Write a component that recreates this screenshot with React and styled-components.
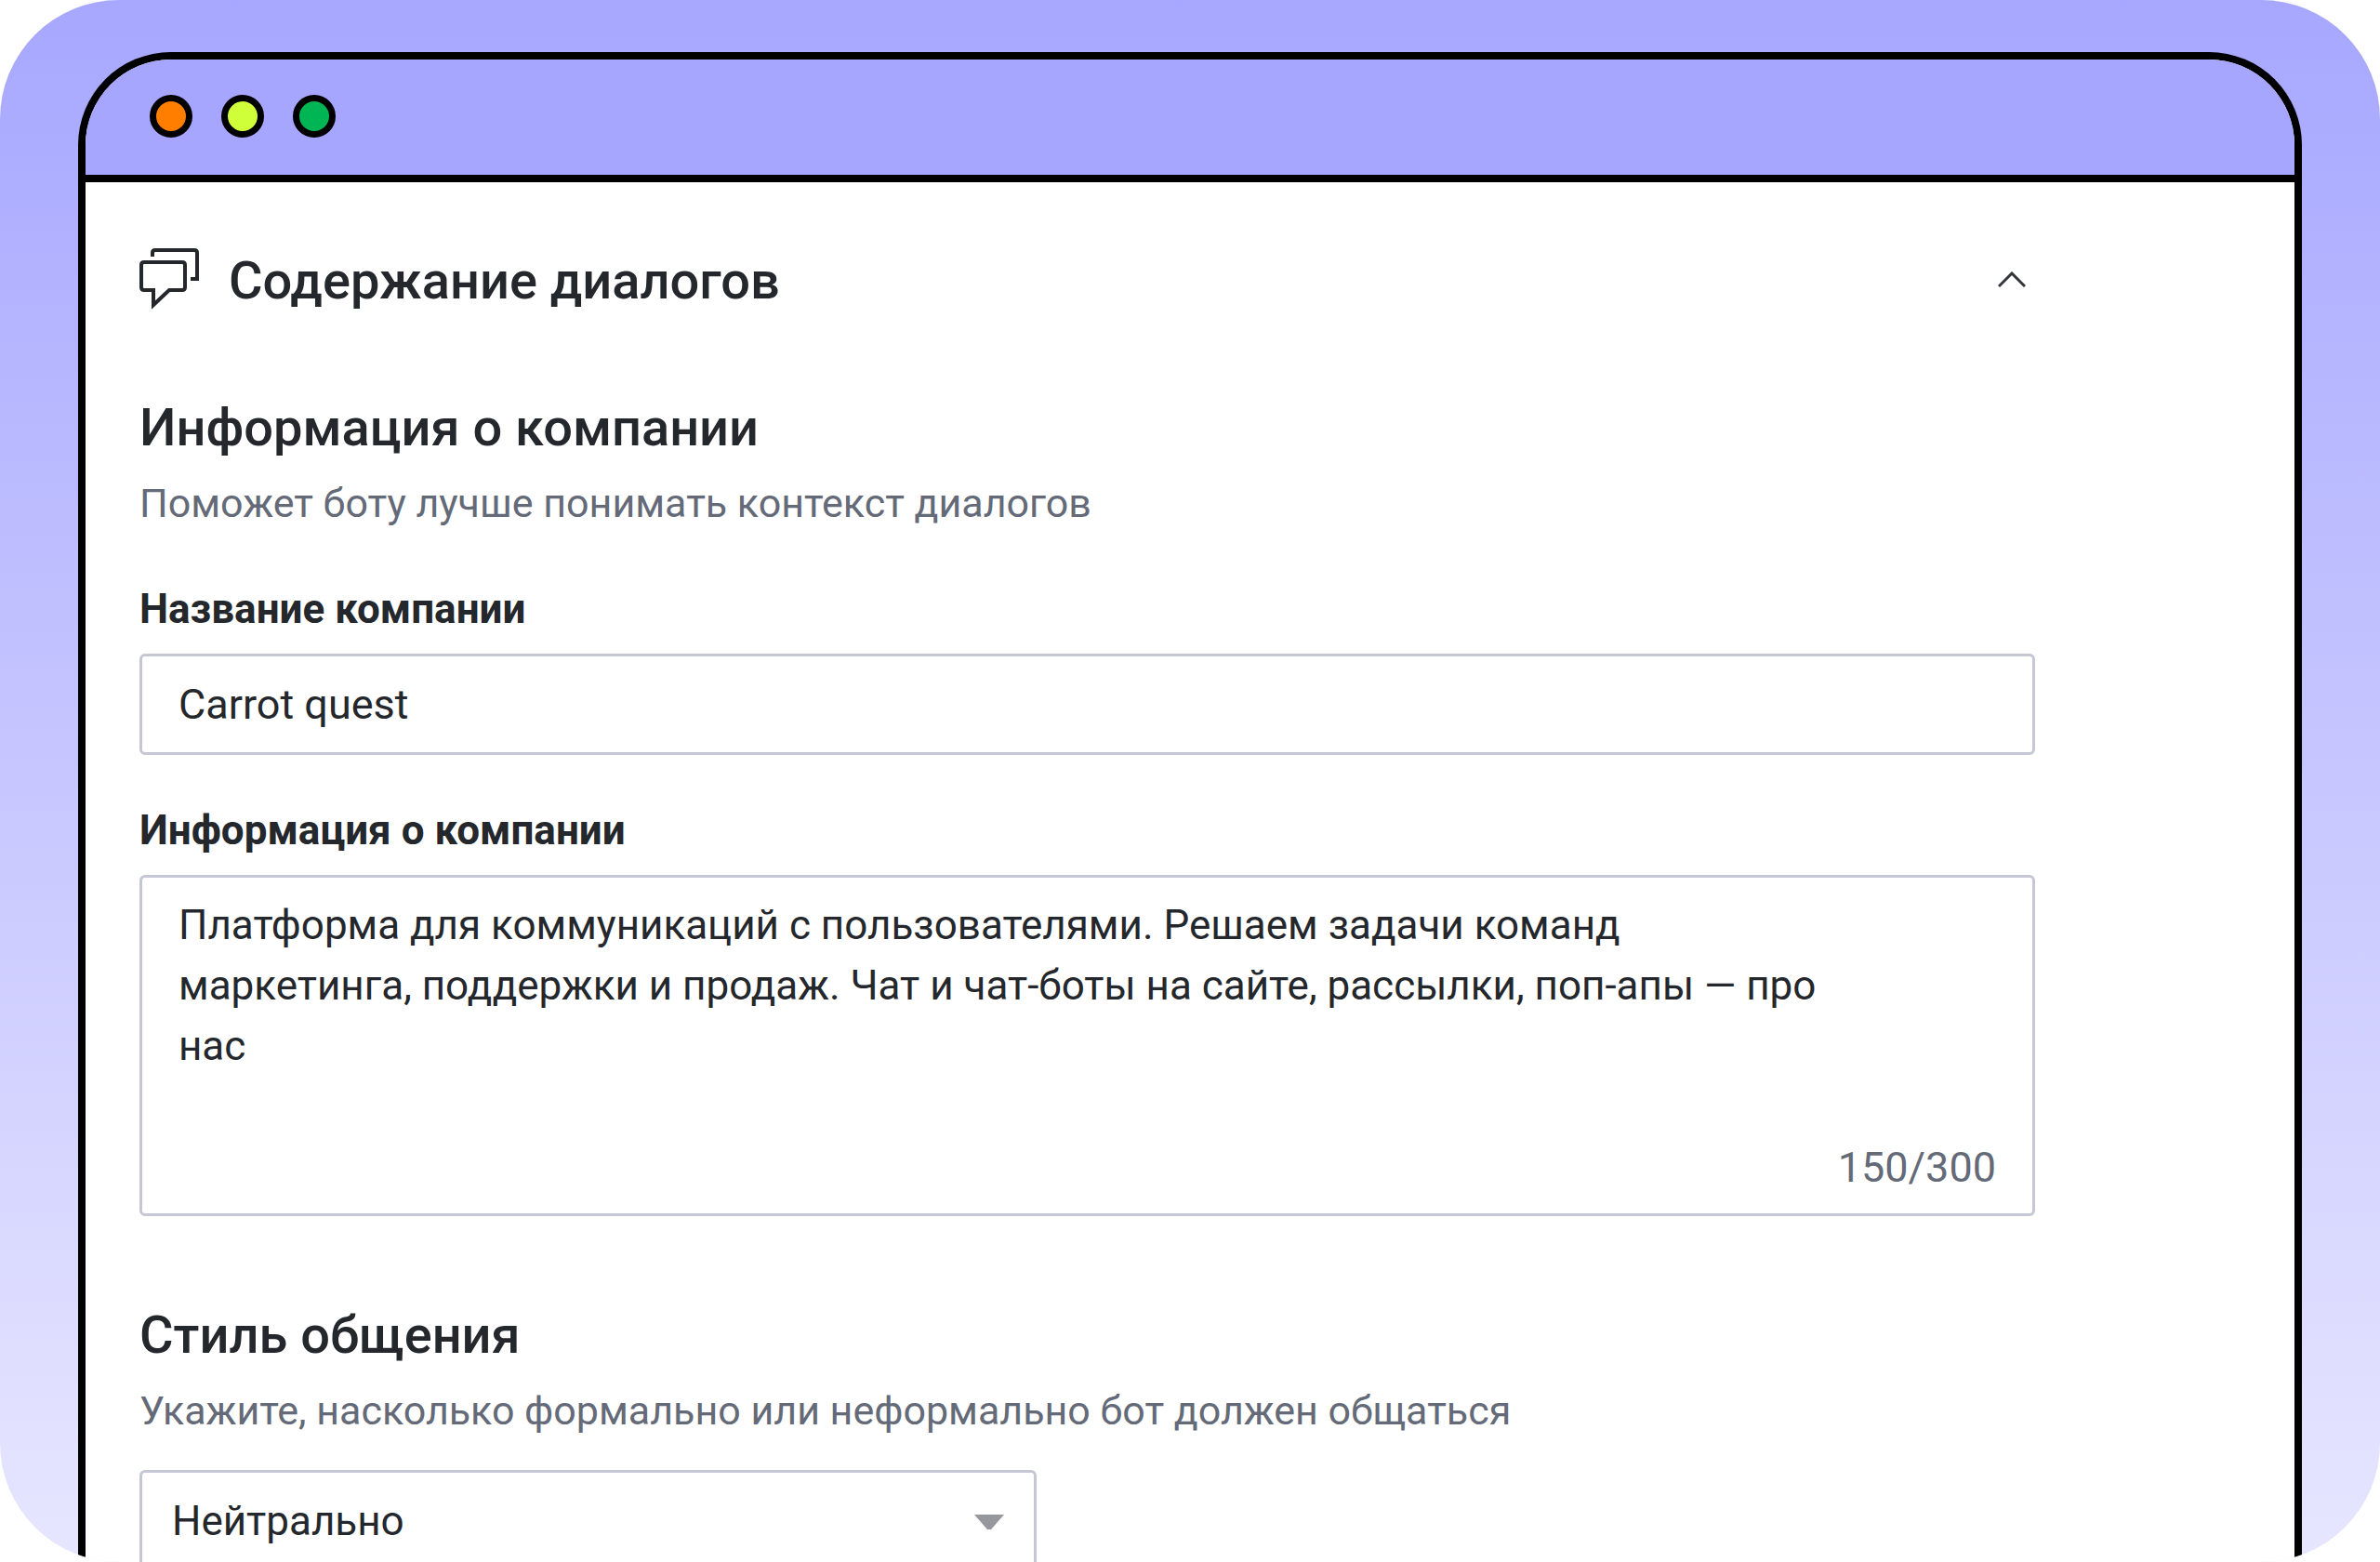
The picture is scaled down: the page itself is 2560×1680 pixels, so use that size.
import React, { useState } from "react";
import styled, { createGlobalStyle } from "styled-components";

const GlobalStyle = createGlobalStyle`
  *, *::before, *::after {
    box-sizing: border-box;
  }
  body {
    margin: 0;
    background-color: #fff;
    color: #24272c;
    font-family: Roboto, "Noto Sans", sans-serif;
    font-size: 44px;
    line-height: 65px;
  }
`;

const Backdrop = styled.main`
  display: flex;
  height: 100vh;
  padding: 56px 84px 0;
  overflow: hidden;
  border-radius: 128px;
  background: linear-gradient(#a7a7ff, #e7e6ff);
`;

const Window = styled.div`
  display: flex;
  flex-direction: column;
  flex: 1;
  min-width: 0;
  overflow: hidden;
  border: 8px solid #000;
  border-bottom: none;
  border-radius: 100px 100px 0 0;
  background-color: #fff;
`;

const TitleBar = styled.div`
  display: flex;
  gap: 31px;
  padding: 38px 69px 40px;
  border-bottom: 8px solid #000;
  background-color: #a6a5ff;
`;

const Dot = styled.span`
  width: 46px;
  height: 46px;
  border: 7px solid #000;
  border-radius: 50%;
  background-color: ${(props) => props.$color};
`;

const Content = styled.form`
  padding: 66px 279px 0 58px;
`;

const Header = styled.header`
  display: flex;
  align-items: center;
  gap: 32px;
  margin-bottom: 80px;
`;

const Title = styled.h2`
  margin: 0;
  padding-top: 2px;
  font-size: 56px;
  line-height: 76px;
  font-weight: 500;
`;

const Toggle = styled.button`
  display: flex;
  margin-left: auto;
  padding: 10px;
  border: none;
  background: none;
  color: #33363b;
  cursor: pointer;
`;

const Section = styled.section`
  margin-bottom: 88px;
`;

const Hint = styled.p`
  margin: 11px 0 0;
  color: #646a77;
  font-size: 43px;
`;

const Field = styled.div`
  display: flex;
  flex-direction: column;
  gap: 15px;
  margin-top: ${(props) => (props.$tight ? "31px" : "49px")};
`;

const Label = styled.label`
  font-weight: 700;
`;

const Input = styled.input`
  width: 100%;
  padding: 19px 39px;
  border: 3px solid #c5c8d4;
  border-radius: 6px;
  background-color: #fff;
  color: inherit;
  font: inherit;
  font-size: 45px;
`;

const TextBox = styled.div`
  display: flex;
  gap: 16px;
  padding: 19px 39px 17px;
  border: 3px solid #c5c8d4;
  border-radius: 6px;
`;

const TextArea = styled.textarea`
  flex: 1;
  min-width: 0;
  padding: 0;
  border: none;
  outline: none;
  resize: none;
  overflow: hidden;
  background: none;
  color: inherit;
  font: inherit;
`;

const Counter = styled.span`
  align-self: flex-end;
  color: #646a77;
  font-size: 45px;
`;

const SelectBox = styled.div`
  position: relative;
  max-width: 965px;
`;

const Select = styled.select`
  display: block;
  width: 100%;
  padding: 20px 96px 18px 32px;
  border: 3px solid #c5c8d4;
  border-radius: 6px;
  appearance: none;
  background-color: #fff;
  color: inherit;
  font: inherit;
`;

const Arrow = styled.svg`
  position: absolute;
  top: 48px;
  right: 35px;
  pointer-events: none;
`;

const DialogsIcon = () => (
  <svg
    width="64"
    height="68"
    viewBox="0 0 64 68"
    fill="none"
    stroke="currentColor"
    strokeWidth="4"
    aria-hidden="true"
  >
    <path d="M14 9V5q0-3 3-3h42q3 0 3 3v28h-7" />
    <path d="M5 15h41q3 0 3 3v24q0 3-3 3H32L15 61V45H5q-3 0-3-3V18q0-3 3-3z" />
  </svg>
);

const ChevronIcon = () => (
  <svg
    width="30"
    height="18"
    viewBox="0 0 30 18"
    fill="none"
    stroke="currentColor"
    strokeWidth="3"
    aria-hidden="true"
  >
    <path d="M1 16L15 2l14 14" />
  </svg>
);

const dots = ["#ff7e00", "#cfff38", "#00b553"];

const description =
  "Платформа для коммуникаций с пользователями. Решаем задачи команд маркетинга, поддержки и продаж. Чат и чат-боты на сайте, рассылки, поп-апы — про нас";

const App = () => {
  const [company, setCompany] = useState("Carrot quest");
  const [info, setInfo] = useState(description);

  return (
    <>
      <GlobalStyle />
      <Backdrop>
        <Window>
          <TitleBar>
            {dots.map((color) => (
              <Dot key={color} $color={color} />
            ))}
          </TitleBar>
          <Content>
            <Header>
              <DialogsIcon />
              <Title>Содержание диалогов</Title>
              <Toggle type="button" aria-label="Свернуть">
                <ChevronIcon />
              </Toggle>
            </Header>
            <Section>
              <Title as="h3">Информация о компании</Title>
              <Hint>Поможет боту лучше понимать контекст диалогов</Hint>
              <Field>
                <Label htmlFor="company">Название компании</Label>
                <Input
                  id="company"
                  type="text"
                  value={company}
                  onChange={(e) => setCompany(e.target.value)}
                />
              </Field>
              <Field>
                <Label htmlFor="info">Информация о компании</Label>
                <TextBox>
                  <TextArea
                    id="info"
                    rows={5}
                    maxLength={300}
                    spellCheck={false}
                    value={info}
                    onChange={(e) => setInfo(e.target.value)}
                  />
                  <Counter>{info.length}/300</Counter>
                </TextBox>
              </Field>
            </Section>
            <Section>
              <Title as="h3" id="style-title">
                Стиль общения
              </Title>
              <Hint>
                Укажите, насколько формально или неформально бот должен общаться
              </Hint>
              <Field $tight>
                <SelectBox>
                  <Select aria-labelledby="style-title" defaultValue="neutral">
                    <option value="neutral">Нейтрально</option>
                  </Select>
                  <Arrow width="32" height="16" viewBox="0 0 32 16">
                    <path d="M0 0h32L18 16h-4z" fill="#97989d" />
                  </Arrow>
                </SelectBox>
              </Field>
            </Section>
          </Content>
        </Window>
      </Backdrop>
    </>
  );
};

export default App;
